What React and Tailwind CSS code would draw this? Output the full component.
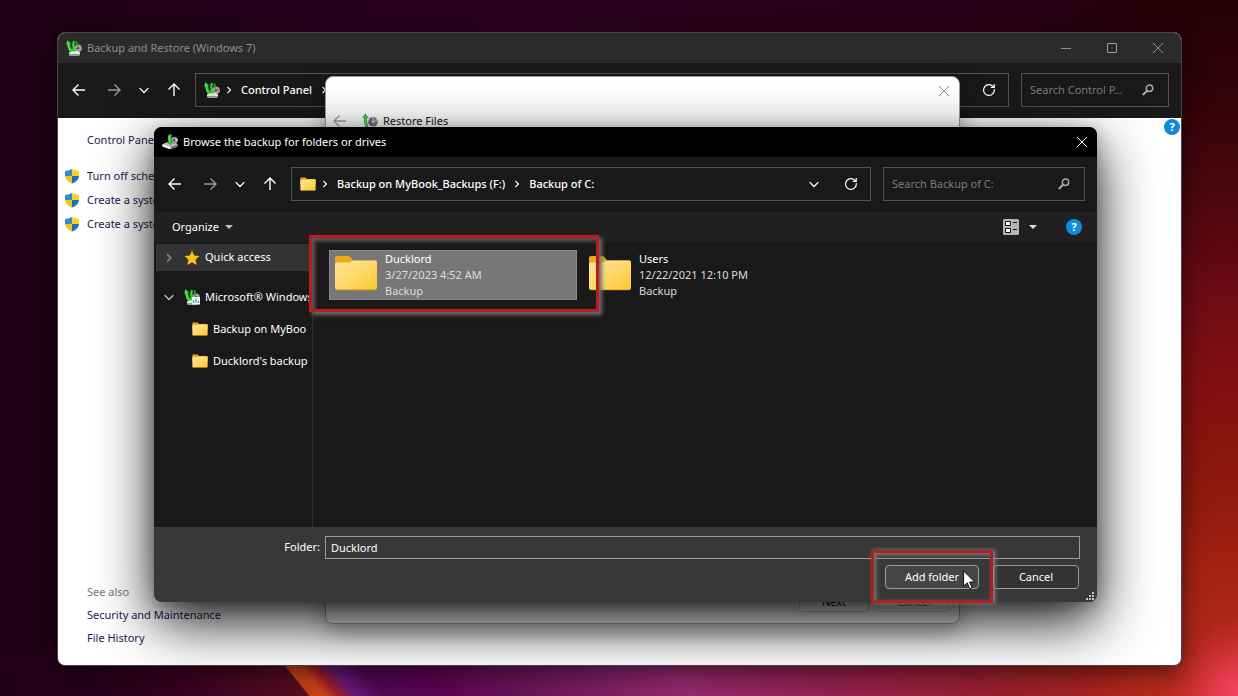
import React, { useState } from "react";

function Wallpaper() {
  return (
    <svg
      aria-hidden="true"
      className="absolute inset-0 w-full h-full"
      viewBox="0 0 1238 696"
      preserveAspectRatio="none"
    >
      <defs>
        <linearGradient id="wp-top" x1="0" x2="1" y1="0" y2="0">
          <stop offset="0" stopColor="#1d0015" />
          <stop offset="0.4" stopColor="#2b001f" />
          <stop offset="0.75" stopColor="#2a0018" />
          <stop offset="1" stopColor="#250009" />
        </linearGradient>
        <linearGradient
          id="wp-bottom"
          gradientUnits="userSpaceOnUse"
          x1="0"
          x2="1238"
          y1="696"
          y2="696"
          gradientTransform="translate(0 696) skewX(39) translate(0 -696)"
        >
          <stop offset="0" stopColor="#1f0017" />
          <stop offset="0.09" stopColor="#26001b" />
          <stop offset="0.17" stopColor="#3c0420" />
          <stop offset="0.249" stopColor="#560d20" />
          <stop offset="0.251" stopColor="#c44312" />
          <stop offset="0.263" stopColor="#cc3e1a" />
          <stop offset="0.274" stopColor="#9c1c2c" />
          <stop offset="0.288" stopColor="#65187c" />
          <stop offset="0.31" stopColor="#4f0a50" />
          <stop offset="0.36" stopColor="#5c0450" />
          <stop offset="0.42" stopColor="#661456" />
          <stop offset="0.56" stopColor="#92296c" />
          <stop offset="0.68" stopColor="#93204e" />
          <stop offset="0.8" stopColor="#962030" />
          <stop offset="0.93" stopColor="#a82216" />
          <stop offset="1" stopColor="#c02a26" />
        </linearGradient>
        <linearGradient id="wp-right" x1="0" x2="0" y1="0" y2="1">
          <stop offset="0" stopColor="#250009" />
          <stop offset="0.14" stopColor="#32030a" />
          <stop offset="0.28" stopColor="#4a070d" />
          <stop offset="0.42" stopColor="#6c0b14" />
          <stop offset="0.55" stopColor="#821012" />
          <stop offset="0.7" stopColor="#8f190d" />
          <stop offset="0.88" stopColor="#ac2616" />
          <stop offset="1" stopColor="#b82c20" />
        </linearGradient>
        <linearGradient id="wp-fade" x1="0" x2="1" y1="0" y2="0">
          <stop offset="0" stopColor="#fff" stopOpacity="0" />
          <stop offset="0.6" stopColor="#fff" />
        </linearGradient>
        <mask id="wp-mask">
          <rect x="1080" width="158" height="696" fill="url(#wp-fade)" />
        </mask>
        <radialGradient id="wp-glow">
          <stop offset="0" stopColor="#ff4468" />
          <stop offset="0.4" stopColor="#ff4468" stopOpacity="0.6" />
          <stop offset="1" stopColor="#e03040" stopOpacity="0" />
        </radialGradient>
      </defs>
      <rect width="1238" height="696" fill="url(#wp-top)" />
      <rect y="650" width="1238" height="46" fill="url(#wp-bottom)" />
      <rect x="1080" width="158" height="696" fill="url(#wp-right)" mask="url(#wp-mask)" />
      <circle cx="1247" cy="698" r="82" fill="url(#wp-glow)" />
    </svg>
  );
}

function ArrowIcon({ dir = "left" }) {
  const paths = {
    left: "M14 8H2.500M7.500 2.500 2 8l5.500 5.500",
    right: "M2 8h11.500M8.500 2.500 14 8l-5.500 5.500",
    up: "M8 14V2.500M2.500 7.500 8 2l5.500 5.500",
  };
  return (
    <svg viewBox="0 0 16 16" className="w-4 h-4" fill="none" stroke="currentColor" strokeWidth="1.400">
      <path d={paths[dir]} />
    </svg>
  );
}

function ChevronIcon({ dir = "right", className = "w-2 h-2" }) {
  const paths = {
    right: "M2.500 1 5.500 4 2.500 7",
    down: "M0.500 2.500 4 6l3.500-3.500",
  };
  return (
    <svg viewBox="0 0 8 8" className={`shrink-0 ${className}`} fill="none" stroke="currentColor" strokeWidth="1.100">
      <path d={paths[dir]} />
    </svg>
  );
}

function CloseIcon() {
  return (
    <svg viewBox="0 0 12 12" className="w-3 h-3" fill="none" stroke="currentColor">
      <path d="M1 1l10 10M11 1 1 11" />
    </svg>
  );
}

function RefreshIcon() {
  return (
    <svg viewBox="0 0 14 14" className="w-3.5 h-3.5" fill="none" stroke="currentColor" strokeWidth="1.200">
      <path d="M12.300 6.200A5.400 5.400 0 1 1 9.800 2.400L12 4.200" />
      <path d="M12.200 1v3.400H8.800" />
    </svg>
  );
}

function SearchIcon() {
  return (
    <svg viewBox="0 0 12 12" className="w-3 h-3 shrink-0" fill="none" stroke="currentColor">
      <circle cx="7.500" cy="4.200" r="3.200" strokeWidth="1.500" />
      <path d="M5.200 6.500.800 11" strokeWidth="2" />
    </svg>
  );
}

function FolderIcon({ className = "w-4 h-4" }) {
  return (
    <svg viewBox="0 0 44 36" preserveAspectRatio="none" className={`shrink-0 ${className}`}>
      <defs>
        <linearGradient id="folder-face" x1="0" x2="1" y1="0" y2="1">
          <stop offset="0" stopColor="#ffe69a" />
          <stop offset="0.550" stopColor="#ffd766" />
          <stop offset="1" stopColor="#fdc52f" />
        </linearGradient>
      </defs>
      <path d="M1 3q0-2 2-2h11q1.500 0 2.500 1.200L19 5.500h22q2 0 2 2V20H1z" fill="#f0a81c" />
      <path d="M1 9q0-1.500 2-1.500h11.500q1.500 0 2.500-1l1.500-1H41q2 0 2 2V33q0 2-2 2H3q-2 0-2-2z" fill="url(#folder-face)" />
      <path d="M1.500 33.500q.5 1.300 2 1.300h37q1.500 0 2-1.300" fill="none" stroke="#d99a1c" strokeWidth="0.800" />
    </svg>
  );
}

// two green arrows in front of a disc and a drive
function BackupIcon({ chart = false }) {
  return (
    <svg viewBox="0 0 16 16" className="w-4 h-4 shrink-0">
      <circle cx="12" cy="8.200" r="3.800" fill="#aaa3a6" />
      <path d="M12 8.200l3.300-2a3.800 3.800 0 0 1 .3 3.200z" fill="#c97a6c" />
      <path d="M12 8.200l-2.600 2.600a3.800 3.800 0 0 1-1-2.300z" fill="#6d6f98" />
      <circle cx="12" cy="8.200" r="1" fill="#3b383c" />
      <path d="M3 12.500 5 11h7l2 1.500v2.300l-1 .9H4l-1-.9z" fill="#e4e6e8" />
      <path d="M3 14h11v.8l-1 .9H4l-1-.9z" fill="#8f9498" />
      <path d="M1.200 0 .300 4.800l1.300-.4c0 3 .5 5 2.600 7.800l2.600-1.400C5 8.500 4.300 6.500 4.200 3.800l1.300-.3z" fill="#2fce2c" />
      <path d="M1.400 2c.4 3.600 1 6.200 3 9" stroke="#8af07a" strokeWidth="0.700" fill="none" />
      <path d="M7 .8c-1 2.800-1 5.200-.2 7.700l-1.500.3 3.500 3.600L10.400 8l-1.400.2C8.300 6 8.300 3.500 9 1.200z" fill="#37d733" />
      <path d="M10.600.6 9.200 3.800l.9.100c0 1.200.3 2.300.8 3.100l1-.6c-.4-.8-.6-1.600-.6-2.600l1-.1z" fill="#1aa31e" />
      {chart && (
        <>
          <rect x="8" y="8" width="8" height="7.500" fill="#f4f7fa" />
          <path d="M9.500 14v-3M12 14v-4.500M14.500 14v-2" stroke="#4f86b8" strokeWidth="1.200" />
        </>
      )}
    </svg>
  );
}

// single curved arrow, over a disc or dropping onto a drive
function RestoreIcon({ disc = false }) {
  if (disc) {
    return (
      <svg viewBox="0 0 16 16" className="w-4 h-4 shrink-0">
        <circle cx="11" cy="8.800" r="4.800" fill="#77727a" />
        <path d="M11 8.800l3.600-3.200a4.800 4.800 0 0 1 1.100 3z" fill="#d0a3a0" />
        <path d="M11 8.800l-2.800 3.800a4.800 4.800 0 0 1-1.900-3.200z" fill="#5c5c88" />
        <path d="M11 8.800l-1-4.700a4.800 4.800 0 0 1 2.400 0z" fill="#b5b5c8" />
        <circle cx="11" cy="8.800" r="1.300" fill="#dedede" />
        <path d="M3.300.600.200 4.600l1.600.2c0 3.600.5 6.400 2 9.800l2.800-1.200C5.200 10.500 4.800 8 4.900 5.200l2 .1z" fill="#32b233" />
        <path d="M3.300 2.500c-.4 4 0 7.500 1.300 10.500" stroke="#8ae07c" strokeWidth="0.800" fill="none" />
      </svg>
    );
  }
  return (
    <svg viewBox="0 0 16 16" className="w-4 h-4 shrink-0">
      <path d="M.5 10.300 5 8h8l2.500 2.500v2L8.500 15.300.5 12.500z" fill="#b9bbbc" />
      <path d="M.5 10.300 8.500 13v2.300L.5 12.500z" fill="#f6f6f6" />
      <path d="M8.500 13l7-2.500v2l-7 2.800z" fill="#75797c" />
      <circle cx="12.200" cy="6.300" r="3.500" fill="#98929a" />
      <path d="M12.200 6.300 15 4.200a3.500 3.500 0 0 1 .5 3z" fill="#d8d4d6" />
      <circle cx="12.200" cy="6.300" r="1" fill="#3c3a3c" />
      <path d="M6.500.800c.8-.8 2.700-.8 3.600-.1-1 1.900-1 4.100-.4 6.300l1.700-.3-2.400 4.500-4.400-2.500 1.800-.7C5.600 5.300 5.700 2.800 6.500.800z" fill="#2fb82e" />
      <path d="M7.600 1.600c-.5 2.200-.4 4.400.3 6.700" stroke="#8bea76" strokeWidth="0.900" fill="none" />
    </svg>
  );
}

function ShieldIcon() {
  return (
    <svg viewBox="0 0 16 16" className="w-4 h-4 shrink-0">
      <path d="M8 .8C6 2.200 3.500 2.800 1 2.900V8h7z" fill="#2b8fd6" />
      <path d="M8 .8c2 1.400 4.500 2 7 2.100V8H8z" fill="#f7d21e" />
      <path d="M1 8c.3 3.600 3 6 7 7.600V8z" fill="#efc41a" />
      <path d="M15 8c-.3 3.600-3 6-7 7.600V8z" fill="#1b72bd" />
    </svg>
  );
}

function StarIcon() {
  return (
    <svg viewBox="0 0 16 16" className="w-4 h-4 shrink-0">
      <path d="M8 .5l2.200 4.900 5.300.6-4 3.600 1.200 5.400L8 12.300 3.300 15l1.200-5.400L.5 6l5.300-.6z" fill="#ffc20f" />
    </svg>
  );
}

function HelpButton() {
  return (
    <button
      aria-label="Help"
      className="w-4 h-4 shrink-0 rounded-full bg-[#138ad8] text-white text-[11px] leading-4 font-bold text-center"
    >
      ?
    </button>
  );
}

function NavButtons() {
  return (
    <div className="flex items-center gap-3.5 text-white">
      <button aria-label="Back">
        <ArrowIcon dir="left" />
      </button>
      <button aria-label="Forward" className="ml-[5px] text-[#9a9a9a]">
        <ArrowIcon dir="right" />
      </button>
      <button aria-label="Recent locations" className="w-4 flex justify-center">
        <ChevronIcon dir="down" className="w-2.5 h-2.5" />
      </button>
      <button aria-label="Up">
        <ArrowIcon dir="up" />
      </button>
    </div>
  );
}

function SearchBox({ label, className }) {
  const [query, setQuery] = useState("");
  return (
    <label className={`flex items-center border border-[#535353] h-[34px] pl-2 pr-3.5 ${className}`}>
      <input
        type="text"
        aria-label={label}
        placeholder={label}
        value={query}
        onChange={(e) => setQuery(e.target.value)}
        className="flex-1 min-w-0 bg-transparent text-white outline-none placeholder:text-[#7b7b7b]"
      />
      <span className="text-[#a8a8a8]">
        <SearchIcon />
      </span>
    </label>
  );
}

function AddressBar({ icon, crumbs, showHistory, trailing }) {
  return (
    <div className="flex-1 min-w-0 h-[34px] flex items-center border border-[#535353] pl-2 pr-3 text-white font-medium">
      <span className="mr-[5px]">{icon}</span>
      {crumbs.map((crumb) => (
        <React.Fragment key={crumb}>
          <ChevronIcon />
          <a href="#" className="mx-2 whitespace-nowrap">
            {crumb}
          </a>
        </React.Fragment>
      ))}
      {trailing && <ChevronIcon />}
      <div className="ml-auto flex items-center gap-[25px]">
        {showHistory && (
          <button aria-label="Previous locations">
            <ChevronIcon dir="down" className="w-2.5 h-2.5" />
          </button>
        )}
        <button aria-label="Refresh">
          <RefreshIcon />
        </button>
      </div>
    </div>
  );
}

function BackupWindow() {
  const tasks = ["Turn off schedule", "Create a system", "Create a system"];
  return (
    <section className="absolute left-[57px] right-[56px] top-8 bottom-[30px] rounded-lg border border-[#4a4046] bg-white flex flex-col overflow-hidden shadow-[0_6px_24px_rgba(0,0,0,0.55)]">
      <header className="h-[30px] shrink-0 flex items-center bg-[#2b2b2b] text-[#8c8c8c] pl-2">
        <BackupIcon />
        <h1 className="ml-[5px]">Backup and Restore (Windows 7)</h1>
        <div className="ml-auto flex">
          <button aria-label="Minimize" className="w-[46px] flex justify-center items-center">
            <span className="w-2.5 h-px bg-[#8c8c8c]" />
          </button>
          <button aria-label="Maximize" className="w-[46px] flex justify-center items-center">
            <span className="w-2.5 h-2.5 rounded-[1px] border border-[#9c9c9c]" />
          </button>
          <button aria-label="Close" className="w-[46px] flex justify-center items-center">
            <CloseIcon />
          </button>
        </div>
      </header>
      <div className="shrink-0 flex items-center bg-[#191919] pl-[13px] pr-3 pt-2.5 pb-[11px]">
        <NavButtons />
        <div className="flex-1 min-w-0 flex gap-3 ml-[13px]">
          <AddressBar icon={<BackupIcon />} crumbs={["Control Panel"]} trailing />
          <SearchBox label="Search Control P..." className="w-[148px]" />
        </div>
      </div>
      <div className="flex-1 flex justify-between">
        <nav className="flex flex-col pl-[29px] pt-2.5 pb-4 text-[#1b1b50]">
          <a href="#" className="leading-6">
            Control Panel Home
          </a>
          <ul className="mt-3 -ml-[23px]">
            {tasks.map((task, i) => (
              <li key={i}>
                <a href="#" className="flex items-center gap-[7px] leading-6">
                  <ShieldIcon />
                  {task}
                </a>
              </li>
            ))}
          </ul>
          <p className="mt-auto leading-[23px] text-[#7a7a7a]">See also</p>
          <a href="#" className="leading-[23px]">
            Security and Maintenance
          </a>
          <a href="#" className="leading-[23px]">
            File History
          </a>
        </nav>
        <div className="p-px">
          <HelpButton />
        </div>
      </div>
    </section>
  );
}

function RestoreWindow() {
  return (
    <section className="absolute left-[325px] right-[278px] top-[76px] bottom-[72px] rounded-lg border border-[#9a9a9a] bg-white flex flex-col overflow-hidden shadow-[0_8px_24px_rgba(0,0,0,0.35)]">
      <header className="h-7 shrink-0 flex justify-end text-[#8a8a8a]">
        <button aria-label="Close" className="w-[30px] flex justify-center items-center">
          <CloseIcon />
        </button>
      </header>
      <div className="flex items-center pl-1.5 h-8 text-[#111]">
        <button aria-label="Back" className="text-[#a0a0a0]">
          <ArrowIcon dir="left" />
        </button>
        <span className="ml-3.5">
          <RestoreIcon disc />
        </span>
        <h2 className="ml-[5px]">Restore Files</h2>
      </div>
      <footer className="mt-auto h-[46px] shrink-0 flex justify-end items-start gap-2.5 pt-[15px] pr-2.5 bg-[#f0f0f0]">
        <button className="w-[70px] h-5 rounded border border-[#c4c4c4] bg-[#fbfbfb] text-black">Next</button>
        <button className="w-[70px] h-5 rounded border border-[#c4c4c4] bg-[#f4f4f4] text-[#555]">Cancel</button>
      </footer>
    </section>
  );
}

function FolderTile({ folder, selected, onSelect }) {
  return (
    <button
      onClick={onSelect}
      className={`w-[248px] shrink-0 flex items-start gap-[7px] pl-1 border text-left leading-4 text-[#dcdcdc] ${
        selected ? "bg-[#777777] border-[#8a8a8a]" : "border-transparent"
      }`}
    >
      <FolderIcon className="w-11 h-9 mt-1" />
      <span className="flex flex-col">
        <span className="text-white">{folder.name}</span>
        <span>{folder.date}</span>
        <span>{folder.kind}</span>
      </span>
    </button>
  );
}

const folders = [
  { name: "Ducklord", date: "3/27/2023 4:52 AM", kind: "Backup" },
  { name: "Users", date: "12/22/2021 12:10 PM", kind: "Backup" },
];

function BrowseDialog() {
  const [selected, setSelected] = useState("Ducklord");

  return (
    <section
      role="dialog"
      aria-labelledby="browse-title"
      className="absolute left-[154px] right-[141px] top-[127px] bottom-[94px] rounded-lg shadow-[0_20px_56px_rgba(0,0,0,0.9),0_4px_16px_rgba(0,0,0,0.25)] text-white"
    >
      <div className="h-full rounded-lg overflow-hidden flex flex-col bg-[#191919]">
        <header className="h-[30px] shrink-0 flex items-center bg-black pl-2">
          <RestoreIcon />
          <h2 id="browse-title" className="ml-[5px]">
            Browse the backup for folders or drives
          </h2>
          <button aria-label="Close" className="ml-auto w-[30px] flex justify-center">
            <CloseIcon />
          </button>
        </header>
        <div className="shrink-0 flex items-center pl-[13px] pr-3 pt-2.5 pb-[11px]">
          <NavButtons />
          <div className="flex-1 min-w-0 flex gap-3 ml-[13px]">
            <AddressBar
              icon={<FolderIcon className="w-4 h-3.5" />}
              crumbs={["Backup on MyBook_Backups (F:)", "Backup of C:"]}
              showHistory
            />
            <SearchBox label="Search Backup of C:" className="w-[202px]" />
          </div>
        </div>
        <div className="h-[30px] shrink-0 flex items-center bg-[#202020] pl-[18px] pr-[15px]">
          <button className="flex items-center gap-1.5">
            Organize
            <span className="border-x-4 border-x-transparent border-t-4 border-t-[#c0c0c0]" />
          </button>
          <button aria-label="Change your view" className="ml-auto mr-[29px] flex items-center gap-2.5">
            <svg viewBox="0 0 16 16" className="w-4 h-4">
              <rect width="16" height="16" rx="1.500" fill="#b4b4b4" />
              <path d="M2.500 2.500h5v4h-5zM2.500 9.500h5v4h-5z" fill="#fff" stroke="#111" />
              <path d="M10 3.500h4M10 10.500h4" stroke="#111" />
            </svg>
            <span className="border-x-4 border-x-transparent border-t-4 border-t-[#e0e0e0]" />
          </button>
          <HelpButton />
        </div>
        <div className="flex-1 min-h-0 flex">
          <nav className="w-[159px] shrink-0 border-r border-[#2f2f2f] px-0.5 overflow-hidden whitespace-nowrap">
            <a href="#" className="mt-0.5 mb-2.5 h-[27px] flex items-center pl-2 bg-[#333333]">
              <span className="text-[#8f8f8f] mr-2.5">
                <ChevronIcon className="w-2.5 h-2.5" />
              </span>
              <StarIcon />
              <span className="ml-[5px]">Quick access</span>
            </a>
            <div className="overflow-hidden">
              <a href="#" className="h-8 flex items-center pl-2">
                <span className="text-[#c8c8c8] mr-2.5">
                  <ChevronIcon dir="down" className="w-2.5 h-2.5" />
                </span>
                <BackupIcon chart />
                <span className="ml-[5px]">Microsoft® Windows</span>
              </a>
              <a href="#" className="h-8 flex items-center pl-9 gap-[5px]">
                <FolderIcon className="w-4 h-3.5" />
                Backup on MyBoo
              </a>
              <a href="#" className="h-8 flex items-center pl-9 gap-[5px]">
                <FolderIcon className="w-4 h-3.5" />
                Ducklord's backup
              </a>
            </div>
          </nav>
          <main className="flex-1 flex items-start gap-1.5 pl-4 pt-2">
            {folders.map((folder) => (
              <FolderTile
                key={folder.name}
                folder={folder}
                selected={folder.name === selected}
                onSelect={() => setSelected(folder.name)}
              />
            ))}
          </main>
        </div>
        <footer className="shrink-0 bg-[#383838] pt-[9px] pr-[17px] pb-[13px]">
          <div className="flex items-center gap-[5px]">
            <label htmlFor="folder-name" className="w-[166px] text-right">
              Folder:
            </label>
            <input
              id="folder-name"
              type="text"
              value={selected}
              onChange={(e) => setSelected(e.target.value)}
              className="flex-1 h-[23px] border border-[#9b9b9b] px-[5px] bg-transparent outline-none"
            />
          </div>
          <div className="mt-1.5 pr-px flex justify-end gap-3.5">
            <button className="w-[94px] h-6 rounded border border-[#9b9b9b] bg-[#454545]">Add folder</button>
            <button className="w-[86px] h-6 rounded border border-[#9b9b9b] bg-[#333333]">Cancel</button>
          </div>
        </footer>
      </div>

      {/* resize grip */}
      <svg aria-hidden="true" viewBox="0 0 8 8" className="absolute right-[3px] bottom-0.5 w-2 h-2" fill="#c4c4c4">
        <path d="M6 0h2v2H6zM3 3h2v2H3zM6 3h2v2H6zM0 6h2v2H0zM3 6h2v2H3zM6 6h2v2H6z" />
      </svg>

      {/* callouts */}
      <div className="pointer-events-none absolute left-[155px] top-[108px] w-[290px] h-[77px] border-[3px] border-[#b81c1e] shadow-[3px_3px_4px_#6e6e6e,inset_3px_3px_4px_#5c5c5c]" />
      <div className="pointer-events-none absolute right-[104px] -bottom-px w-[122px] h-[53px] border-[3px] border-[#b02022] shadow-[2px_0_4px_#8a8a8a,inset_2px_2px_4px_#7c7c7c]" />

      <svg aria-hidden="true" viewBox="0 0 13 20" className="absolute right-[121px] bottom-3 w-[13px] h-5">
        <path d="M.6.9v15.300l3.600-3.300 2.500 5.800 2.400-1-2.500-5.700h5z" fill="#fff" stroke="#000" strokeWidth="0.900" />
      </svg>
    </section>
  );
}

function App() {
  return (
    <div className="relative h-screen overflow-hidden bg-[#1b0014] text-[11px] font-['Noto_Sans','Open_Sans',sans-serif]">
      <Wallpaper />
      <BackupWindow />
      <RestoreWindow />
      <BrowseDialog />
    </div>
  );
}

export default App;
